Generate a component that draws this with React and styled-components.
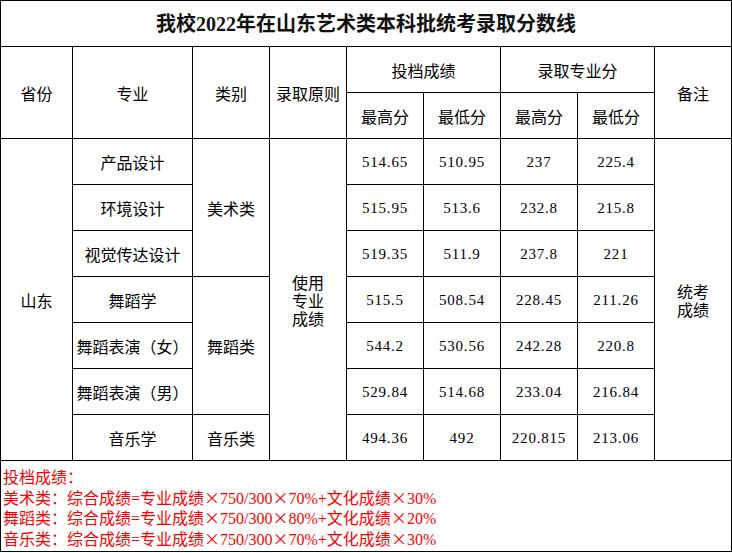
import React from "react";
import styled, { createGlobalStyle } from "styled-components";

const GlobalStyle = createGlobalStyle`
  html, body {
    margin: 0;
    padding: 0;
    background: #fff;
  }
  body {
    font-family: "Noto Sans CJK SC", "Noto Sans", sans-serif;
  }
`;

const rows = [
  { major: "产品设计", scores: ["514.65", "510.95", "237", "225.4"] },
  { major: "环境设计", scores: ["515.95", "513.6", "232.8", "215.8"] },
  { major: "视觉传达设计", scores: ["519.35", "511.9", "237.8", "221"] },
  { major: "舞蹈学", scores: ["515.5", "508.54", "228.45", "211.26"] },
  { major: "舞蹈表演（女）", scores: ["544.2", "530.56", "242.28", "220.8"] },
  { major: "舞蹈表演（男）", scores: ["529.84", "514.68", "233.04", "216.84"] },
  { major: "音乐学", scores: ["494.36", "492", "220.815", "213.06"] },
];

// category cells sit on the first row of their group
const categories = {
  0: { label: "美术类", span: 3 },
  3: { label: "舞蹈类", span: 3 },
  6: { label: "音乐类", span: 1 },
};

const notes = [
  "投档成绩：",
  "美术类：综合成绩=专业成绩×750/300×70%+文化成绩×30%",
  "舞蹈类：综合成绩=专业成绩×750/300×80%+文化成绩×20%",
  "音乐类：综合成绩=专业成绩×750/300×70%+文化成绩×30%",
];

// the × sign is full width in the original, so it gets its own font
const renderNote = (text) =>
  text.split("×").map((part, i) => (
    <React.Fragment key={i}>
      {i > 0 && <Times>×</Times>}
      {part}
    </React.Fragment>
  ));

const App = () => {
  return (
    <>
      <GlobalStyle />
      <Sheet>
        <Title $cols={9}>我校2022年在山东艺术类本科批统考录取分数线</Title>

        <Cell $rows={2}>省份</Cell>
        <Cell $rows={2}>专业</Cell>
        <Cell $rows={2}>类别</Cell>
        <Cell $rows={2}>录取原则</Cell>
        <Cell $cols={2}>投档成绩</Cell>
        <Cell $cols={2}>录取专业分</Cell>
        <Cell $rows={2}>备注</Cell>
        <Cell>最高分</Cell>
        <Cell>最低分</Cell>
        <Cell>最高分</Cell>
        <Cell>最低分</Cell>

        {rows.map((row, i) => (
          <React.Fragment key={row.major}>
            {i === 0 && <Cell $rows={7}>山东</Cell>}
            <Cell>{row.major}</Cell>
            {categories[i] && (
              <Cell $rows={categories[i].span}>{categories[i].label}</Cell>
            )}
            {i === 0 && (
              <Cell $rows={7}>
                <Stack>
                  <span>使用</span>
                  <span>专业</span>
                  <span>成绩</span>
                </Stack>
              </Cell>
            )}
            {row.scores.map((s, j) => (
              <Score key={j}>{s}</Score>
            ))}
            {i === 0 && (
              <Cell $rows={7}>
                <Stack>
                  <span>统考</span>
                  <span>成绩</span>
                </Stack>
              </Cell>
            )}
          </React.Fragment>
        ))}

        <Notes>
          {notes.map((n) => (
            <NoteLine key={n}>{renderNote(n)}</NoteLine>
          ))}
        </Notes>
      </Sheet>
    </>
  );
};

const Sheet = styled.div`
  display: grid;
  grid-template-columns: 71px 119px repeat(7, 76px);
  grid-template-rows: repeat(10, 45px) 90px;
  gap: 1px;
  padding: 1px;
  width: 732px;
  box-sizing: border-box;
  background: #000;
`;

const Cell = styled.div`
  grid-column: span ${(props) => props.$cols || 1};
  grid-row: span ${(props) => props.$rows || 1};
  display: flex;
  align-items: center;
  justify-content: center;
  text-align: center;
  background: #fff;
  color: #000;
  font-size: 16px;
  line-height: 18px;
  white-space: nowrap;
`;

const Stack = styled.div`
  display: flex;
  flex-direction: column;
  align-items: center;
  line-height: 18px;
`;

const Title = styled(Cell)`
  font-family: "Liberation Serif", "Noto Sans CJK SC", serif;
  font-size: 20px;
  font-weight: bold;
  color: #111;
  padding-top: 1px;
`;

const Score = styled(Cell)`
  font-family: "Liberation Serif", "Noto Sans CJK SC", serif;
  font-size: 15px;
  letter-spacing: 0.8px;
`;

const Notes = styled.div`
  grid-column: 1 / -1;
  background: #fff;
  padding: 8px 2px 0;
  color: #ff0000;
  font-family: "Liberation Serif", "Noto Sans CJK SC", serif;
  font-size: 16px;
  line-height: 18.5px;
`;

const NoteLine = styled.div`
  white-space: nowrap;
`;

const Times = styled.span`
  font-family: "Noto Sans CJK SC", sans-serif;
`;

export default App;
